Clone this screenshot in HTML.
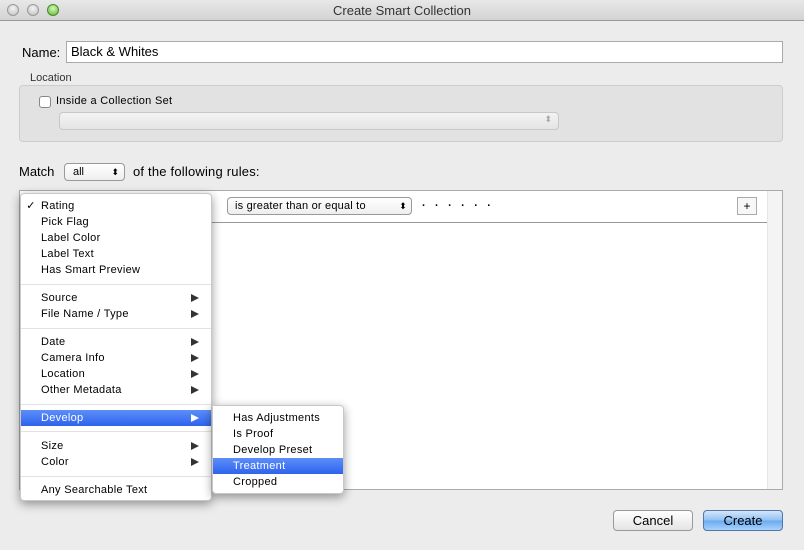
<!DOCTYPE html>
<html><head><style>
*{margin:0;padding:0;box-sizing:border-box}
body{width:804px;height:550px;background:#ececec;font-family:"Liberation Sans",sans-serif;font-size:11px;color:#000;position:relative;overflow:hidden}
.abs{position:absolute}
.title{left:0;top:0;width:804px;height:21px;background:linear-gradient(#e8e8e8,#d3d3d3);border-bottom:1px solid #999;text-align:center;line-height:21px;font-size:13px;color:#333}
.dot{top:4px;width:12px;height:12px;border-radius:50%;background:radial-gradient(circle at 50% 35%,#f4f4f4,#bdbdbd);border:1px solid #999}
.menu{background:#fff;border-radius:4px;box-shadow:0 3px 10px rgba(0,0,0,.4);border:1px solid #c8c8c8}
.it{position:absolute;left:0;right:0;height:16px;line-height:16px;padding-left:20px;font-size:11px;letter-spacing:0.3px}
.sep{position:absolute;left:0;right:0;height:1px;background:#e2e2e2}
.arr{position:absolute;right:12px;top:4px;width:0;height:0;border-left:8px solid #333;border-top:4.5px solid transparent;border-bottom:4.5px solid transparent}
.hl{background:linear-gradient(#5c8ef8,#2e63ee);color:#fff}
.hl .arr{border-left-color:#fff}
.btn{height:21px;border:1px solid #999;border-radius:4px;text-align:center;line-height:19px;font-size:13px;background:linear-gradient(#fff,#e4e4e4)}
</style></head><body>
<div class="abs title">Create Smart Collection</div>
<div class="abs dot" style="left:7px"></div>
<div class="abs dot" style="left:27px"></div>
<div class="abs dot" style="left:47px;background:radial-gradient(circle at 50% 35%,#d6f7b8,#5cb82e);border-color:#4a8a2a"></div>

<div class="abs" style="left:22px;top:45px;font-size:13px">Name:</div>
<div class="abs" style="left:66px;top:41px;width:717px;height:22px;background:#fff;border:1px solid #aaa;font-size:13px;line-height:20px;padding-left:4px">Black &amp; Whites</div>
<div class="abs" style="left:30px;top:72px;font-size:11px;color:#333">Location</div>
<div class="abs" style="left:19px;top:85px;width:764px;height:57px;background:#e2e2e2;border:1px solid #cdcdcd;border-radius:4px"></div>
<div class="abs" style="left:39px;top:96px;width:12px;height:12px;background:#fff;border:1px solid #888;border-radius:3px"></div>
<div class="abs" style="left:56px;top:95px;letter-spacing:0.3px">Inside a Collection Set</div>
<div class="abs" style="left:59px;top:112px;width:500px;height:18px;border:1px solid #c8c8c8;border-radius:4px;background:linear-gradient(#f3f3f3,#e5e5e5)"><span style="position:absolute;right:6px;top:1px;font-size:9px;color:#aaa">⬍</span></div>

<div class="abs" style="left:19px;top:164px;font-size:13px">Match</div>
<div class="abs" style="left:64px;top:163px;width:61px;height:18px;border:1px solid #999;border-radius:4px;background:linear-gradient(#fff,#eee);padding-left:8px;line-height:16px">all<span style="position:absolute;right:5px;top:0;font-size:9px">⬍</span></div>
<div class="abs" style="left:133px;top:164px;font-size:13px;letter-spacing:0.2px">of the following rules:</div>

<div class="abs" style="left:19px;top:190px;width:764px;height:300px;background:#fff;border:1px solid #aaa"></div>
<div class="abs" style="left:767px;top:191px;width:15px;height:298px;background:#f4f4f4;border-left:1px solid #e6e6e6"></div>
<div class="abs" style="left:20px;top:222px;width:747px;height:1px;background:#999"></div>
<div class="abs" style="left:227px;top:197px;width:185px;height:18px;border:1px solid #999;border-radius:4px;background:linear-gradient(#fff,#eee);padding-left:7px;line-height:16px;letter-spacing:0.2px">is greater than or equal to<span style="position:absolute;right:4px;top:0;font-size:9px">⬍</span></div>
<div class="abs" style="left:422px;top:197px;letter-spacing:10px;font-weight:bold">......</div>
<div class="abs" style="left:737px;top:197px;width:20px;height:18px;border:1px solid #aaa;background:#f7f7f7;text-align:center;line-height:16px;font-size:12px">+</div>

<div class="abs btn" style="left:613px;top:510px;width:80px">Cancel</div>
<div class="abs btn" style="left:703px;top:510px;width:80px;border-color:#5574a8;background:linear-gradient(#d4e6fb,#8fc0f3 50%,#6aaaf0 51%,#a6d2fb)">Create</div>

<div class="abs menu" style="left:20px;top:193px;width:192px;height:308px">
<div class="it" style="top:4px;padding-left:0"><span style="display:inline-block;width:20px;text-align:center">✓</span>Rating</div>
<div class="it" style="top:20px">Pick Flag</div>
<div class="it" style="top:36px">Label Color</div>
<div class="it" style="top:52px">Label Text</div>
<div class="it" style="top:68px">Has Smart Preview</div>
<div class="sep" style="top:90px"></div>
<div class="it" style="top:96px">Source<i class="arr"></i></div>
<div class="it" style="top:112px">File Name / Type<i class="arr"></i></div>
<div class="sep" style="top:134px"></div>
<div class="it" style="top:140px">Date<i class="arr"></i></div>
<div class="it" style="top:156px">Camera Info<i class="arr"></i></div>
<div class="it" style="top:172px">Location<i class="arr"></i></div>
<div class="it" style="top:188px">Other Metadata<i class="arr"></i></div>
<div class="sep" style="top:210px"></div>
<div class="it hl" style="top:216px">Develop<i class="arr"></i></div>
<div class="sep" style="top:237px"></div>
<div class="it" style="top:244px">Size<i class="arr"></i></div>
<div class="it" style="top:260px">Color<i class="arr"></i></div>
<div class="sep" style="top:282px"></div>
<div class="it" style="top:288px">Any Searchable Text</div>
</div>
<div class="abs menu" style="left:212px;top:405px;width:132px;height:89px;border-radius:0 4px 4px 4px">
<div class="it" style="top:4px">Has Adjustments</div>
<div class="it" style="top:20px">Is Proof</div>
<div class="it" style="top:36px">Develop Preset</div>
<div class="it hl" style="top:52px">Treatment</div>
<div class="it" style="top:68px">Cropped</div>
</div>
</body></html>
